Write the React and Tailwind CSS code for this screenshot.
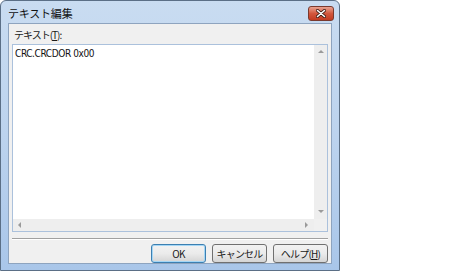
import React from "react";

const font = { fontFamily: '"Noto Sans CJK JP", "Liberation Sans", sans-serif' };
const mono = { fontFamily: '"DejaVu Sans Condensed", "Liberation Sans", "Noto Sans CJK JP", sans-serif' };

function Arrow({ dir }) {
  const pts = {
    up: "1,5 4,2 7,5",
    down: "1,2 4,5 7,2",
    left: "5,1 2,4 5,7",
    right: "2,1 5,4 2,7",
  }[dir];
  return (
    <svg width="8" height="8" viewBox="0 0 8 8">
      <polygon points={pts} fill="#9a9a9a" />
    </svg>
  );
}

function Btn({ children, primary }) {
  return (
    <div
      className={`w-[55px] h-[19px] flex items-center justify-center whitespace-nowrap rounded-[3px] border text-[10px] tracking-[-0.8px] leading-none text-[#1a1a1a] ${
        primary ? "border-[#3c7fb1] shadow-[inset_0_0_0_1px_#a4d6f5]" : "border-[#707070]"
      } bg-gradient-to-b from-[#f2f2f2] via-[#ebebeb] to-[#d5d5d5]`}
      style={font}
    >
      {children}
    </div>
  );
}

export default function App() {
  return (
    <div className="w-[474px] h-[276px] bg-white overflow-hidden" style={font}>
      <div className="w-[340px] h-[271px] border border-[#5b6f86] rounded-t-[6px] bg-gradient-to-b from-[#c9dcf1] via-[#bcd3ee] to-[#a9c6e9] flex flex-col">
        <div className="h-[22px] flex items-center justify-between pl-[7px] pr-[5px] shrink-0">
          <span className="text-[11px] text-[#111] leading-none mt-[3px] tracking-[-0.2px]">テキスト編集</span>
          <div className="w-[26px] h-[15px] mt-[2px] rounded-[3px] border border-[#7a3a2e] bg-gradient-to-b from-[#e8a290] via-[#d2573d] to-[#c23b21] flex items-center justify-center">
            <svg width="10" height="9" viewBox="0 0 10 9">
              <path d="M1.5 1.5 L8.5 7.5 M8.5 1.5 L1.5 7.5" stroke="#3a1a14" strokeWidth="3" strokeLinecap="round" />
              <path d="M1.5 1.5 L8.5 7.5 M8.5 1.5 L1.5 7.5" stroke="#ffffff" strokeWidth="1.6" strokeLinecap="round" />
            </svg>
          </div>
        </div>
        <div className="flex-1 mx-[7px] mb-[7px] border border-[#8ea4bf] bg-[#f0f0f0] flex flex-col px-[3px]">
          <div className="h-[19px] flex items-end pl-[2px] text-[10px] tracking-[-1px] text-[#1a1a1a] leading-none pb-[3px]">
            テキスト(<span className="underline">T</span>):
          </div>
          <div className="mt-[1px] h-[188px] border border-[#abc1dc] bg-white flex flex-col">
            <div className="flex-1 flex min-h-0">
              <div className="flex-1 pl-[2px] pt-[4px] text-[10px] tracking-[-0.4px] leading-none text-[#111]" style={mono}>
                CRC.CRCDOR 0x00
              </div>
              <div className="w-[13px] bg-[#eeeeee] flex flex-col justify-between items-center py-[3px]">
                <Arrow dir="up" />
                <Arrow dir="down" />
              </div>
            </div>
            <div className="h-[12px] flex">
              <div className="flex-1 bg-[#eeeeee] flex justify-between items-center px-[3px]">
                <Arrow dir="left" />
                <Arrow dir="right" />
              </div>
              <div className="w-[13px] bg-[#f0f0f0]" />
            </div>
          </div>
          <div className="mt-[6px] h-[2px] border-t border-[#a0a0a0] border-b border-b-white" />
          <div className="flex justify-end gap-[6px] mt-[4px] pr-[0px]">
            <Btn primary>OK</Btn>
            <Btn>キャンセル</Btn>
            <Btn>
              ヘルプ(<span className="underline">H</span>)
            </Btn>
          </div>
        </div>
      </div>
    </div>
  );
}
